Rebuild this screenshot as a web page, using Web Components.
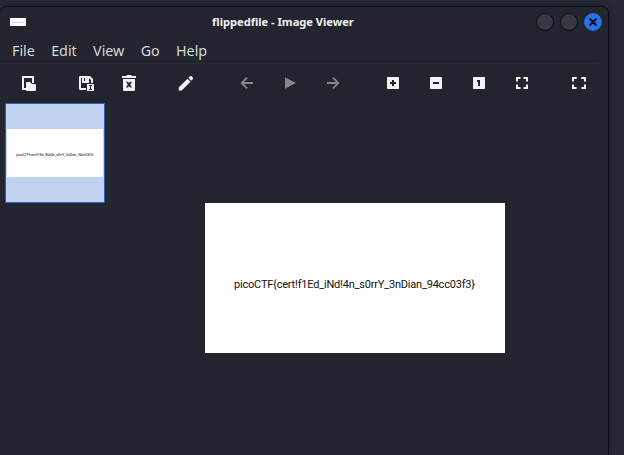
<!DOCTYPE html>
<html lang="en"><head><meta charset="utf-8"><title>flippedfile - Image Viewer</title>
<style>html,body{margin:0;width:624px;height:455px;overflow:hidden;background:#272a35;font-family:"Noto Sans",sans-serif}</style></head>
<body><viewer-window></viewer-window>
<script>
const define=(name,html)=>customElements.define(name,class extends HTMLElement{
  constructor(){super();this.attachShadow({mode:'open'}).innerHTML=html}
});
const icons={
 open:'<path d="M5 5h12v7h-2V7H7v10h2v2H5z"/><path d="M9 12q0-1 1-1h3l2 2h3q1 0 1 1v5q0 1-1 1h-8q-1 0-1-1z"/>',
 save:'<path fill-rule="evenodd" d="M6 5h10l3 3v4h-2V9l-2-2v5H8V7H7v10h5v2H6q-1 0-1-1V6q0-1 1-1zM10 7v3h1V7z"/><path fill-rule="evenodd" d="M13 13h7v7h-7zM15 14v1h1v3h-1v1h3v-1h-1v-3h1v-1z"/>',
 trash:'<path d="M5 5h4l1-1h4l1 1h4v2H5z"/><path fill-rule="evenodd" d="M6 8h12v11q0 1-1 1H7q-1 0-1-1zM9 10.8l1.8 2.7L9 16.5h2l1-1.4 1 1.4h2l-1.8-3L15 10.8h-2l-1 1.3-1-1.3z"/>',
 edit:'<path d="M4.7 16.5 13.5 7.7l3 3-8.8 8.8h-3zM14.4 6.8l1.5-1.5q.8-.8 1.6 0l1.3 1.3q.8.8 0 1.6l-1.5 1.5z"/>',
 back:'<path d="M18 12H8M12 6.7 6.7 12l5.3 5.3" fill="none" stroke="#85878c" stroke-width="1.8"/>',
 play:'<path fill="#85878c" d="M7 6.3 18 12 7 17.7z"/>',
 next:'<path d="M6 12h10M12 6.7l5.3 5.3-5.3 5.3" fill="none" stroke="#85878c" stroke-width="1.8"/>',
 plus:'<rect x="6" y="6" width="12" height="12" rx=".7"/><path d="M9 12h6M12 9v6" stroke="#23252e" stroke-width="2"/>',
 minus:'<rect x="6" y="6" width="12" height="12" rx=".7"/><path d="M9 12h6" stroke="#23252e" stroke-width="2"/>',
 one:'<rect x="6" y="6" width="12" height="12" rx=".7"/><path d="M10 9h3v6h-2v-4h-1z" fill="#23252e"/>',
 fit:'<path d="M10.5 7H7v3.5M13.5 7H17v3.5M10.5 17H7v-3.5M13.5 17H17v-3.5" fill="none" stroke="#f3f3f3" stroke-width="2"/>',
 full:'<path d="M9.7 7H6v3.5M14.3 7H18v3.5M9.7 17H6v-3.5M14.3 17H18v-3.5" fill="none" stroke="#f3f3f3" stroke-width="2"/>'
};
customElements.define('tool-icon',class extends HTMLElement{
 connectedCallback(){this.attachShadow({mode:'open'}).innerHTML=`<style>:host{display:block;width:33px;padding-left:10px}svg{display:block;fill:#f3f3f3}</style><svg width="24" height="24">${icons[this.getAttribute('name')]}</svg>`}
});
define('window-button',`<style>:host{box-sizing:border-box;display:block;width:18px;height:18px;border-radius:50%;background:#363842;border:1px solid #0a0b10}:host([close]){background:#2973ee;border-color:#2568d8}svg{display:none}:host([close]) svg{display:block}</style><svg width="16" height="16"><path d="m4.5 4.5 7 7m0-7-7 7" stroke="#0c1224" stroke-width="2.2"/></svg>`);
define('title-bar',`<style>:host{display:flex;align-items:center;height:30px;padding:0 6px 0 10px}i{display:flex;align-items:center;width:16px;height:8px;background:#fff}i:after{content:"";height:1px;width:12px;margin:auto;background:#cfd3da}b{font-size:11.1px;color:#f2f2f3;line-height:16px;white-space:nowrap;margin-left:186px}div{display:flex;gap:6px;margin-left:auto}</style><i></i><b><slot></slot></b><div><window-button></window-button><window-button></window-button><window-button close></window-button></div>`);
define('menu-item',`<style>:host{display:block;font-size:14.3px;line-height:20px;color:#d5d6d8;white-space:nowrap}</style><slot></slot>`);
define('menu-bar',`<style>:host{display:flex;gap:16.3px;height:22px;padding:4px 0 0 12px}</style><slot></slot>`);
define('tool-bar',`<style>:host{display:flex;height:29px;padding:7px 0 0 7px;margin-right:9px;border-top:1px solid #282b34}section{display:flex;margin-right:14px}.g{margin-right:18px}.h{margin-right:17px}</style>
<section><tool-icon name="open"></tool-icon></section><section><tool-icon name="save"></tool-icon><tool-icon name="trash"></tool-icon></section><section class="g"><tool-icon name="edit"></tool-icon></section><section class="h"><tool-icon name="back"></tool-icon><tool-icon name="play"></tool-icon><tool-icon name="next"></tool-icon></section><section><tool-icon name="plus"></tool-icon><tool-icon name="minus"></tool-icon><tool-icon name="one"></tool-icon><tool-icon name="fit"></tool-icon></section><section><tool-icon name="full"></tool-icon></section>`);
define('flag-image',`<style>:host{display:block;background:#fff}svg{display:block;width:100%}text{font-family:Roboto,sans-serif;font-size:11px;fill:#111}</style><svg viewBox="0 0 300 150"><text x="29" y="85" textLength="241" lengthAdjust="spacing">picoCTF{cert!f1Ed_iNd!4n_s0rrY_3nDian_94cc03f3}</text></svg>`);
define('thumb-tile',`<style>:host{box-sizing:border-box;display:flex;align-items:center;width:100px;height:100px;border:1px solid #2f60b8;background:#c0d2ef}flag-image{width:96px;margin:auto}</style><flag-image></flag-image>`);
define('image-stage',`<style>:host{display:flex;align-items:flex-start;padding:3px 0 0 5px}.main{width:300px;margin:100px 0 0 100px}</style><thumb-tile></thumb-tile><flag-image class="main"></flag-image>`);
define('viewer-window',`<style>:host{display:block;box-sizing:border-box;width:609px;height:449px;margin-top:6px;border-top:1px solid #0e1017;border-right:1px solid #0b0c12;border-radius:7px 7px 0 0;background:#23252e;box-shadow:0 0 7px #171922}</style>
<title-bar>flippedfile - Image Viewer</title-bar><menu-bar><menu-item>File</menu-item><menu-item>Edit</menu-item><menu-item>View</menu-item><menu-item>Go</menu-item><menu-item>Help</menu-item></menu-bar><tool-bar></tool-bar><image-stage></image-stage>`);
</script></body></html>
